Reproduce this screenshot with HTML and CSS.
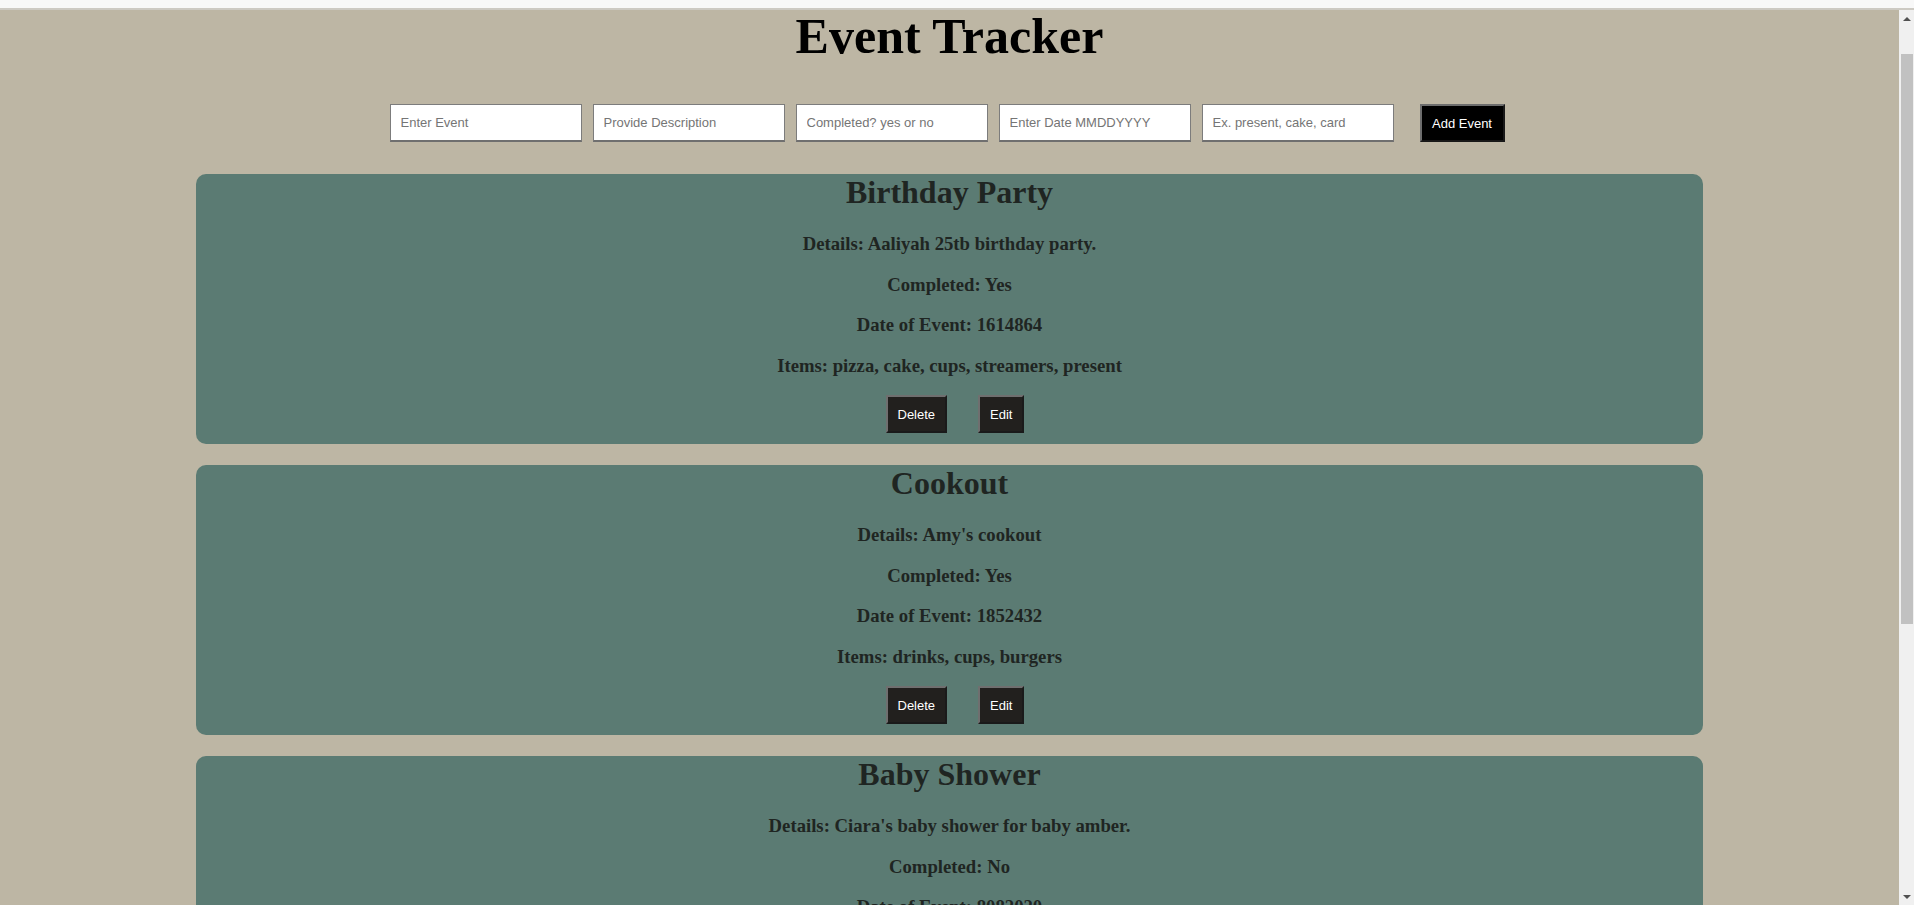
FILE: index.html
```html
<!DOCTYPE html>
<html lang="en">
<head>
<meta charset="utf-8">
<title>Event Tracker</title>
<link rel="stylesheet" href="styles.css">
</head>
<body>
<div class="topband"></div>
<div class="viewport">
  <main class="page">
    <h1 class="title">Event Tracker</h1>
    <form class="event-form">
      <input class="field" type="text" placeholder="Enter Event">
      <input class="field" type="text" placeholder="Provide Description">
      <input class="field" type="text" placeholder="Completed? yes or no">
      <input class="field" type="text" placeholder="Enter Date MMDDYYYY">
      <input class="field" type="text" placeholder="Ex. present, cake, card">
      <button class="add-btn" type="button">Add Event</button>
    </form>
    <section class="event-list">
      <article class="event-card">
        <h2 class="event-name">Birthday Party</h2>
        <h3 class="event-line">Details: Aaliyah 25tb birthday party.</h3>
        <h3 class="event-line">Completed: Yes</h3>
        <h3 class="event-line">Date of Event: 1614864</h3>
        <h3 class="event-line">Items: pizza, cake, cups, streamers, present</h3>
        <div class="event-actions">
          <button class="card-btn" type="button">Delete</button>
          <button class="card-btn" type="button">Edit</button>
        </div>
      </article>
      <article class="event-card">
        <h2 class="event-name">Cookout</h2>
        <h3 class="event-line">Details: Amy's cookout</h3>
        <h3 class="event-line">Completed: Yes</h3>
        <h3 class="event-line">Date of Event: 1852432</h3>
        <h3 class="event-line">Items: drinks, cups, burgers</h3>
        <div class="event-actions">
          <button class="card-btn" type="button">Delete</button>
          <button class="card-btn" type="button">Edit</button>
        </div>
      </article>
      <article class="event-card">
        <h2 class="event-name">Baby Shower</h2>
        <h3 class="event-line">Details: Ciara's baby shower for baby amber.</h3>
        <h3 class="event-line">Completed: No</h3>
        <h3 class="event-line">Date of Event: 8082020</h3>
        <h3 class="event-line">Items: diapers, bottles, cake</h3>
        <div class="event-actions">
          <button class="card-btn" type="button">Delete</button>
          <button class="card-btn" type="button">Edit</button>
        </div>
      </article>
    </section>
  </main>
  <div class="scrollbar">
    <div class="sb-arrow sb-up"></div>
    <div class="sb-track">
      <div class="sb-thumb"></div>
    </div>
    <div class="sb-arrow sb-down"></div>
  </div>
</div>
</body>
</html>
```

FILE: styles.css
```css
html, body {
  margin: 0;
  padding: 0;
  height: 905px;
  overflow: hidden;
}

body {
  display: flex;
  flex-direction: column;
  background: #bdb6a4;
  font-family: "Liberation Serif", "Times New Roman", serif;
}

.topband {
  height: 8px;
  background: #f8f8f8;
  border-bottom: 2px solid #cdcac3;
  flex: none;
}

.viewport {
  flex: 1;
  min-height: 0;
  display: flex;
}

.page {
  flex: 1;
  min-width: 0;
  overflow: hidden;
  padding: 0 8px;
}

.title {
  margin: 0;
  font-size: 50px;
  line-height: 53px;
  font-weight: bold;
  text-align: center;
  color: #000;
}

.event-form {
  margin: 41px 0 0 0;
  display: flex;
  justify-content: center;
  gap: 11px;
}

.field {
  box-sizing: border-box;
  width: 192px;
  height: 38px;
  margin: 0;
  padding: 0 10px;
  background: #fff;
  border: 1px solid #7c7c7c;
  border-bottom: 2px solid #6f6f6f;
  font-family: "Liberation Sans", Arial, sans-serif;
  font-size: 13px;
  color: #222;
  border-radius: 0;
}

.field::placeholder {
  color: #757575;
}

.add-btn {
  box-sizing: border-box;
  width: 85px;
  height: 38px;
  margin: 0 5px 0 15px;
  padding: 0;
  background: #000;
  color: #fff;
  border: 2px outset #6d6d6d;
  font-family: "Liberation Sans", Arial, sans-serif;
  font-size: 13px;
}

.event-list {
  margin-top: 32px;
  display: flex;
  flex-direction: column;
  align-items: center;
  gap: 21px;
}

.event-card {
  box-sizing: border-box;
  width: 80%;
  background: #5b7b73;
  border-radius: 10px;
  padding: 0 0 11px 0;
  text-align: center;
  color: #1f2522;
}

.event-name {
  margin: 0 0 22px 0;
  font-size: 32px;
  line-height: 37px;
  font-weight: bold;
}

.event-line {
  margin: 0 0 19px 0;
  font-size: 18.72px;
  line-height: 21.5px;
  font-weight: bold;
}

.event-actions {
  margin-top: 1px;
  display: flex;
  justify-content: center;
  gap: 31px;
  padding-left: 11px;
}

.card-btn {
  box-sizing: border-box;
  height: 38px;
  padding: 0 10px;
  margin: 0;
  background: #22201e;
  color: #fff;
  border: 2px outset #6f6f6f;
  font-family: "Liberation Sans", Arial, sans-serif;
  font-size: 13px;
}

.scrollbar {
  flex: none;
  width: 15px;
  background: #f0f0f0;
  display: flex;
  flex-direction: column;
}

.sb-arrow {
  flex: none;
  height: 17px;
  display: flex;
  align-items: center;
  justify-content: center;
}

.sb-up::before {
  content: "";
  border-left: 4px solid transparent;
  border-right: 4px solid transparent;
  border-bottom: 4px solid #505050;
}

.sb-down::before {
  content: "";
  border-left: 4px solid transparent;
  border-right: 4px solid transparent;
  border-top: 4px solid #505050;
}

.sb-track {
  flex: 1;
  padding-top: 27px;
}

.sb-thumb {
  height: 570px;
  margin: 0 1px 0 2px;
  background: #c1c1c1;
}
```
